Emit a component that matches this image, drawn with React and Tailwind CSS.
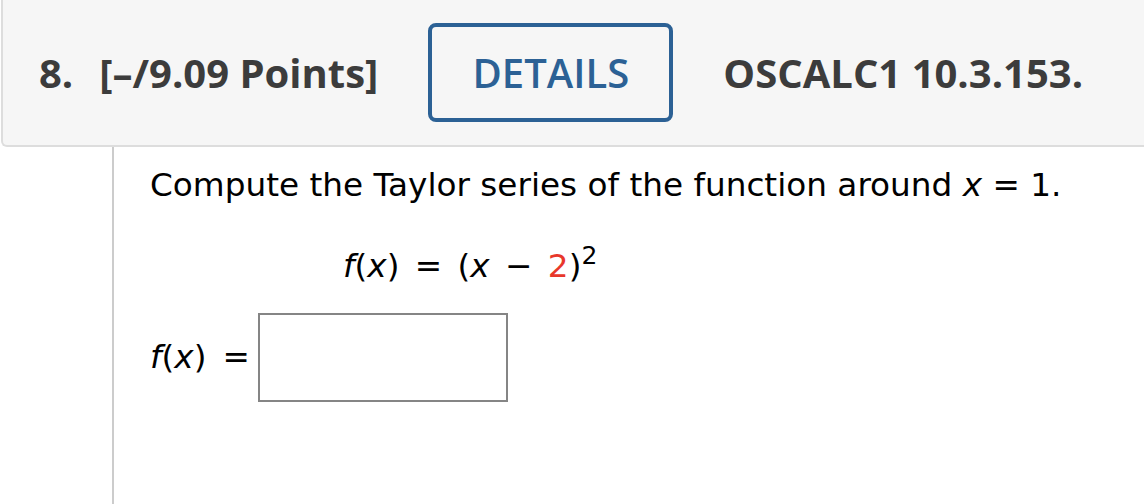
export default function App() {
  return (
    <div className="w-[1144px] h-[504px] overflow-hidden bg-white">
      {/* Question header */}
      <div className="h-[147px] ml-px bg-[#f6f6f6] border-l-2 border-b-2 border-[#dddddd] rounded-bl-[6px] flex items-center pl-[36px] gap-[50px] font-['Open_Sans',sans-serif] text-[40px] text-[#3c3c3c]">
        <h2 className="font-bold whitespace-nowrap">
          8.<span className="inline-block w-[26px]" />[–/9.09 Points]
        </h2>
        <button className="w-[245px] h-[99px] border-[4px] border-[#2c6195] rounded-[8px] font-semibold text-[#2c6195]">
          DETAILS
        </button>
        <span className="font-bold whitespace-nowrap">OSCALC1 10.3.153.</span>
      </div>

      {/* Question body */}
      <div className="ml-[112px] h-[357px] border-l-2 border-[#cccccc] pl-[36px] pt-[18px] font-['DejaVu_Sans',Verdana,sans-serif] text-[32.7px] text-black">
        <p className="leading-[40px]">
          Compute the Taylor series of the function around <i>x</i> = 1.
        </p>
        <p className="mt-[41px] ml-[193px] leading-[40px] [word-spacing:5px]">
          <i>f</i>(<i>x</i>) = (<i>x</i> − <span className="text-[#e8372b]">2</span>)
          <sup className="text-[25px] -top-[13px]">2</sup>
        </p>
        <div className="mt-[27px] flex items-center">
          <span>
            <i>f</i>(<i>x</i>)
          </span>
          <span className="ml-[16px]">=</span>
          <input className="ml-[8px] w-[250px] h-[89px] border-2 border-[#858585] outline-none" />
        </div>
      </div>
    </div>
  )
}
